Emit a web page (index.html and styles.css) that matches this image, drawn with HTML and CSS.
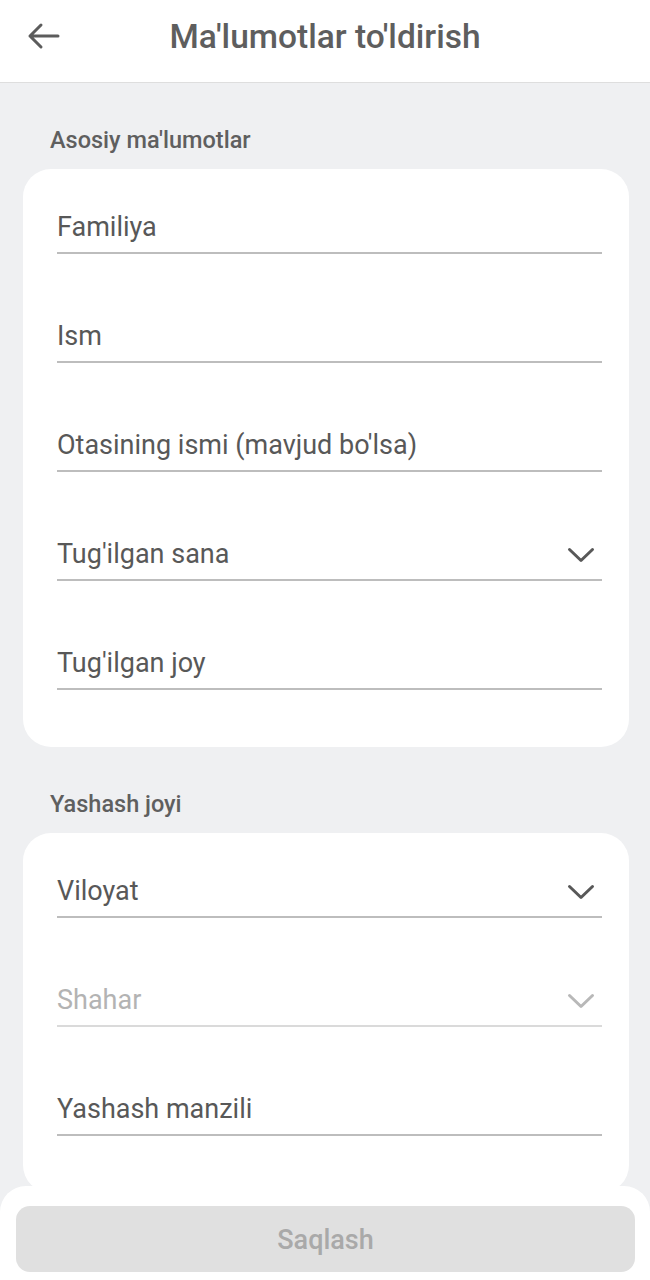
FILE: index.html
```html
<!DOCTYPE html>
<html lang="uz">
<head>
<meta charset="utf-8">
<title>Ma'lumotlar to'ldirish</title>
<link rel="stylesheet" href="styles.css">
</head>
<body>
<header class="topbar">
  <button class="back" aria-label="Orqaga">
    <svg width="34" height="28" viewBox="0 0 34 28"><path d="M32 14 H4 M15 3 L4 14 L15 25" fill="none" stroke="#5c5c5c" stroke-width="3" stroke-linecap="round" stroke-linejoin="round"/></svg>
  </button>
  <h1 class="title">Ma'lumotlar to'ldirish</h1>
</header>

<main class="content">
  <h2 class="section-label">Asosiy ma'lumotlar</h2>
  <section class="card">
    <div class="field"><span class="field-text">Familiya</span></div>
    <div class="field"><span class="field-text">Ism</span></div>
    <div class="field"><span class="field-text">Otasining ismi (mavjud bo'lsa)</span></div>
    <div class="field"><span class="field-text">Tug'ilgan sana</span>
      <svg class="chev" width="28" height="16" viewBox="0 0 28 16"><polyline points="2.5,2.5 14,13.5 25.5,2.5" fill="none" stroke="currentColor" stroke-width="3" stroke-linecap="round" stroke-linejoin="round"/></svg>
    </div>
    <div class="field"><span class="field-text">Tug'ilgan joy</span></div>
  </section>

  <h2 class="section-label">Yashash joyi</h2>
  <section class="card">
    <div class="field"><span class="field-text">Viloyat</span>
      <svg class="chev" width="28" height="16" viewBox="0 0 28 16"><polyline points="2.5,2.5 14,13.5 25.5,2.5" fill="none" stroke="currentColor" stroke-width="3" stroke-linecap="round" stroke-linejoin="round"/></svg>
    </div>
    <div class="field disabled"><span class="field-text">Shahar</span>
      <svg class="chev" width="28" height="16" viewBox="0 0 28 16"><polyline points="2.5,2.5 14,13.5 25.5,2.5" fill="none" stroke="currentColor" stroke-width="3" stroke-linecap="round" stroke-linejoin="round"/></svg>
    </div>
    <div class="field"><span class="field-text">Yashash manzili</span></div>
  </section>
</main>

<footer class="bottom-bar">
  <button class="save" disabled>Saqlash</button>
</footer>
</body>
</html>
```

FILE: styles.css
```css
* { box-sizing: border-box; }

html, body {
  margin: 0;
  padding: 0;
}

body {
  background: #eff0f2;
  font-family: Roboto, "Noto Sans", "Liberation Sans", sans-serif;
  color: #575757;
  min-height: 1280px;
}

.topbar {
  height: 83px;
  background: #ffffff;
  border-bottom: 1px solid #dedede;
  display: flex;
  align-items: center;
  justify-content: center;
  position: relative;
}

.back {
  position: absolute;
  left: 26px;
  top: 22px;
  width: 34px;
  height: 28px;
  padding: 0;
  border: none;
  background: none;
  display: flex;
}

.title {
  margin: 0 0 10px 0;
  font-size: 33.5px;
  font-weight: 500;
  color: #5e5e5e;
  letter-spacing: 0;
}

.content {
  padding: 45px 21px 120px 23px;
}

.section-label {
  margin: 0 0 17px 27px;
  font-size: 23.5px;
  line-height: 24px;
  font-weight: 500;
  color: #5f5f5f;
}

.card {
  background: #ffffff;
  border-radius: 28px;
  padding: 42px 27px 57px 34px;
  display: flex;
  flex-direction: column;
  gap: 66px;
  margin-bottom: 45px;
}

.field {
  display: flex;
  align-items: center;
  justify-content: space-between;
  height: 43px;
  padding-bottom: 9px;
  border-bottom: 2px solid #bdbdbd;
  color: #585858;
}

.field-text {
  font-size: 27px;
  line-height: 32px;
}

.chev {
  color: #585858;
  margin-right: 7px;
  margin-top: 2px;
}

.field.disabled {
  border-bottom-color: #dadada;
  color: #b3b3b3;
}

.field.disabled .chev {
  color: #b8b8b8;
}

.bottom-bar {
  position: fixed;
  left: 0;
  right: 0;
  bottom: 0;
  height: 94px;
  background: #ffffff;
  border-radius: 26px 26px 0 0;
  padding: 20px 15px 8px 16px;
}

.save {
  width: 100%;
  height: 66px;
  border: none;
  border-radius: 14px;
  background: #e0e0e0;
  color: #a9a9a9;
  font-family: Roboto, "Noto Sans", "Liberation Sans", sans-serif;
  font-size: 27px;
  font-weight: 500;
  padding-top: 3px;
}
```
